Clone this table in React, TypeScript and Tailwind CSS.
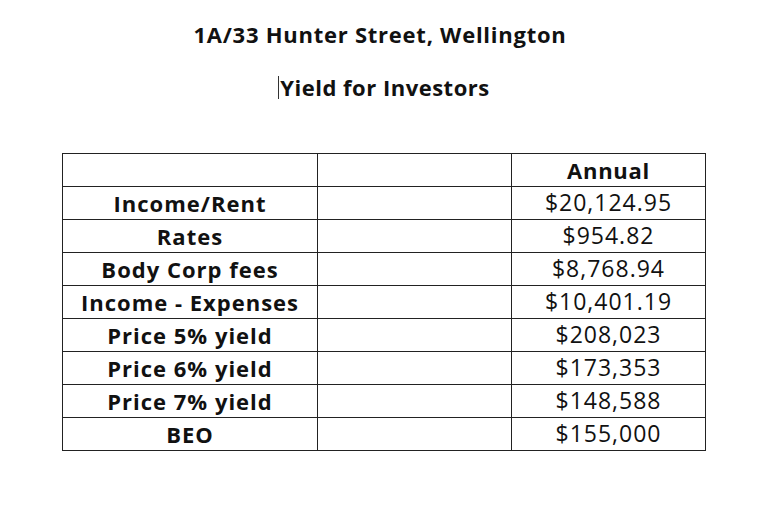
const rows: { label: string; value: string }[] = [
  { label: "Income/Rent", value: "$20,124.95" },
  { label: "Rates", value: "$954.82" },
  { label: "Body Corp fees", value: "$8,768.94" },
  { label: "Income - Expenses", value: "$10,401.19" },
  { label: "Price 5% yield", value: "$208,023" },
  { label: "Price 6% yield", value: "$173,353" },
  { label: "Price 7% yield", value: "$148,588" },
  { label: "BEO", value: "$155,000" },
];

export default function App() {
  return (
    <div
      className="flex h-[512px] w-[768px] flex-col items-center bg-white text-[#111]"
      style={{ fontFamily: "'Open Sans', sans-serif" }}
    >
      <h1 className="mt-[20px] pr-[8px] text-[22px] font-bold leading-[28px] tracking-[0.75px]">
        1A/33 Hunter Street, Wellington
      </h1>
      <h2 className="mt-[25px] flex items-center text-[22px] font-bold leading-[28px] tracking-[0.5px]">
        <span className="mr-[1px] h-[23px] w-px bg-[#333]" />
        Yield for Investors
      </h2>

      <table className="mt-[52px] border-collapse">
        <tbody>
          <tr className="h-[33px]">
            <td className="w-[255px] border border-[#222]" />
            <td className="w-[194px] border border-[#222]" />
            <td className="w-[194px] border border-[#222] pb-[1px] text-center text-[22px] font-bold leading-none tracking-[0.7px]">
              Annual
            </td>
          </tr>
          {rows.map((row) => (
            <tr key={row.label} className="h-[33px]">
              <td className="border border-[#222] pb-[1px] text-center text-[22px] font-bold leading-none tracking-[1px]">
                {row.label}
              </td>
              <td className="border border-[#222]" />
              <td className="border border-[#222] pb-[1px] text-center text-[23px] leading-none tracking-[1px]">
                {row.value}
              </td>
            </tr>
          ))}
        </tbody>
      </table>
    </div>
  );
}
